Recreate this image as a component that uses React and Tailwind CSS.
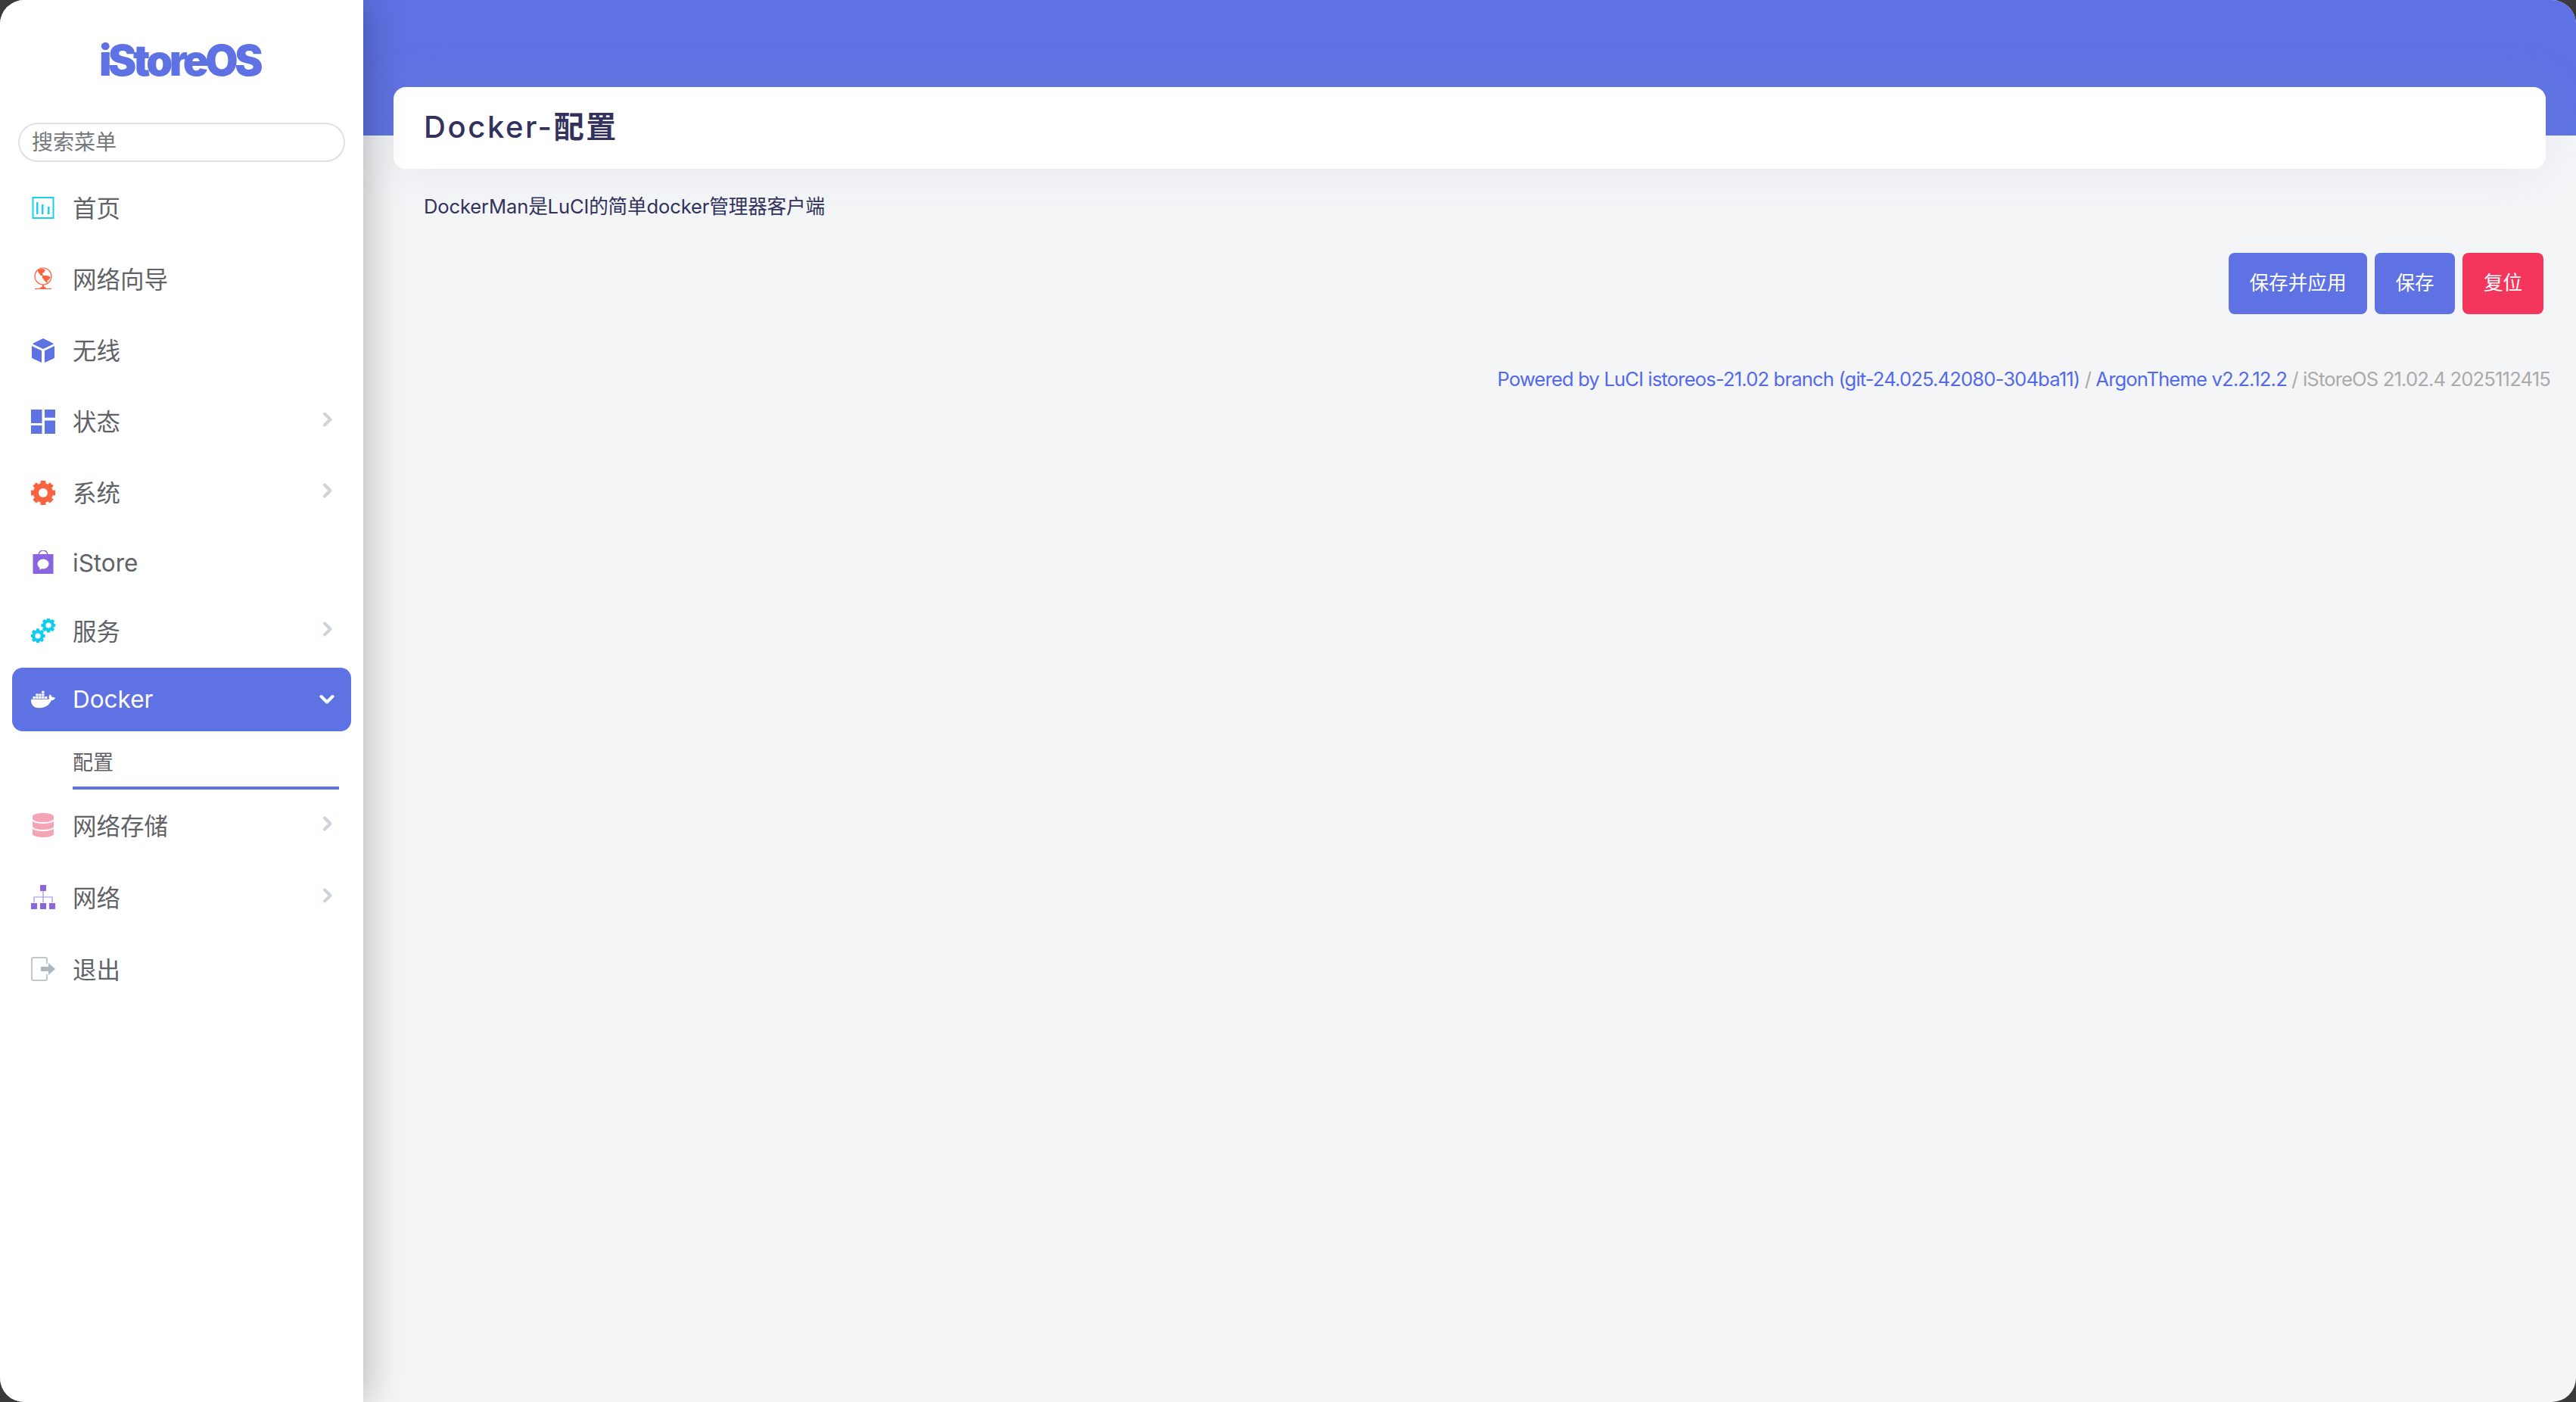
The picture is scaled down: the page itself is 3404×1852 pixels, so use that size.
import {FaDatabase, FaDocker} from 'react-icons/fa'

// gear with eight teeth, used by 系统 and 服务
function Gear({x = 16, y = 16, r = 1, color}) {
    return (
        <g transform={`translate(${x} ${y}) scale(${r})`} fill={color}>
            {[0, 45, 90, 135, 180, 225, 270, 315].map(a => (
                <rect key={a} x="-3.4" y="-16" width="6.8" height="7" transform={`rotate(${a})`}/>
            ))}
            <circle r="9.5" fill="none" stroke={color} strokeWidth="7"/>
        </g>
    )
}

const icons = {
    home: (
        <svg viewBox="0 0 32 32" className="w-8 h-8">
            <rect x="2.5" y="2" width="27" height="27" fill="none" stroke="#1ad0f1" strokeWidth="2"/>
            <rect x="7" y="8" width="2.5" height="16" fill="#1ad0f1"/>
            <rect x="14" y="11" width="2.5" height="13" fill="#1ad0f1"/>
            <rect x="22" y="14" width="2.5" height="10" fill="#1ad0f1"/>
        </svg>
    ),
    globe: (
        <svg viewBox="0 0 32 32" className="w-8 h-8">
            <circle cx="16" cy="12" r="11" fill="none" stroke="#fb6340" strokeWidth="1.2"/>
            <path d="M9 3l7-1 3 2-2 3-2 1 1 3-3 0-4-5z" fill="#fb6340"/>
            <path d="M15 11l6 0 5 2-2 3-2 1-1 4-3-3-3-4z" fill="#fb6340"/>
            <path d="M15 23h2v3h-2z" fill="#fb6340"/>
            <path d="M13 26h6l1 2H12z" fill="#fb6340"/>
            <path d="M5 28.5h22" stroke="#fb6340" strokeWidth="1.2"/>
        </svg>
    ),
    cube: (
        <svg viewBox="0 0 32 32" className="w-8 h-8">
            <path d="M16 0l13.2 6.6a1 1 0 0 1 0 1.2L16 14 2.8 7.8a1 1 0 0 1 0-1.2z" fill="#5e72e4"/>
            <path d="M1 10l13 6.3V32L2 26.5a2 2 0 0 1-1-1.8z" fill="#5e72e4"/>
            <path d="M31 10l-13 6.3V32l12-5.5a2 2 0 0 0 1-1.8z" fill="#5e72e4"/>
        </svg>
    ),
    dash: (
        <svg viewBox="0 0 32 32" className="w-8 h-8" fill="#5e72e4">
            <rect x="0" y="0" width="14.5" height="18"/>
            <rect x="18" y="0" width="14.5" height="10.7"/>
            <rect x="0" y="21" width="14.5" height="11"/>
            <rect x="18" y="14.5" width="14.5" height="17.5"/>
        </svg>
    ),
    gear: (
        <svg viewBox="0 0 32 32" className="w-8 h-8">
            <Gear color="#fb6340"/>
        </svg>
    ),
    bag: (
        <svg viewBox="0 0 32 32" className="w-8 h-8">
            <path d="M10 8V6a6 6 0 0 1 12 0v2" fill="none" stroke="#8965e0" strokeWidth="1.5"/>
            <path d="M2.5 7h27v26h-27z" fill="#8965e0" transform="translate(0 -2)"/>
            <ellipse cx="16" cy="18" rx="7.5" ry="6.5" fill="#fff"/>
            <path d="M12 22l-1 4 5-3z" fill="#fff"/>
        </svg>
    ),
    gears: (
        <svg viewBox="0 0 32 32" className="w-8 h-8">
            <Gear x={23} y={9} r={0.6} color="#11cdef"/>
            <Gear x={9} y={23} r={0.6} color="#11cdef"/>
        </svg>
    ),
    docker: <FaDocker className="w-8 h-8 text-white"/>,
    db: <FaDatabase className="w-7 h-8 text-[#f3a4b5]"/>,
    net: (
        <svg viewBox="0 0 32 32" className="w-8 h-8">
            <g fill="#8965e0">
                <rect x="12" y="0" width="8" height="8"/>
                <rect x="0" y="24" width="8" height="8"/>
                <rect x="12" y="24" width="8" height="8"/>
                <rect x="24" y="24" width="8" height="8"/>
            </g>
            <path d="M16 8v15M4 23v-7h24v7" fill="none" stroke="#a58ce8" strokeWidth="1.2"/>
        </svg>
    ),
    logout: (
        <svg viewBox="0 0 32 32" className="w-8 h-8">
            <path d="M21 9V3a2 2 0 0 0-2-2H3a2 2 0 0 0-2 2v26a2 2 0 0 0 2 2h16a2 2 0 0 0 2-2v-6" fill="none" stroke="#c2c8d0" strokeWidth="2"/>
            <path d="M13 13h10V8l9 8-9 8v-5H13z" fill="#adb5bd"/>
        </svg>
    ),
}

function ChevronRight() {
    return (
        <svg viewBox="0 0 14 20" className="w-[14px] h-5 absolute right-[40px] top-[calc(50%-14px)]">
            <path d="M3 2.5l7.500 7.500L3 17.500" fill="none" stroke="#ced4da" strokeWidth="4" strokeLinecap="round" strokeLinejoin="round"/>
        </svg>
    )
}

function MenuItem({icon, label, arrow, h}) {
    return (
        <div className={`relative flex items-center pl-[41px] text-[#5f6267] text-[31.500px] ${h}`}>
            <span className="w-8 -mt-[3px] flex justify-center shrink-0">{icons[icon]}</span>
            <span className="ml-[23px]">{label}</span>
            {arrow && <ChevronRight/>}
        </div>
    )
}

export default function App() {
    return (
        <div className="h-[1852px] w-[3404px] bg-[#3a3a3c] overflow-hidden font-[Inter,'Noto_Sans_CJK_SC',sans-serif]">
            <div className="h-full w-full flex rounded-[32px] overflow-hidden bg-[#f4f5f7]">
                <aside className="relative z-10 w-[480px] shrink-0 bg-white shadow-[0_0_50px_rgba(0,0,0,0.3)]">
                    <div className="h-[162px] flex justify-center pt-[42px] pr-[6px]">
                        <span className="text-[#5e72e4] text-[56px] leading-[76px] font-black tracking-[-0.08em]">iStoreOS</span>
                    </div>
                    <div className="mx-6 h-[52px] flex items-center rounded-full border-2 border-[#dee2e6] pl-[16px] text-[28px] text-[#77797c]">
                        搜索菜单
                    </div>
                    <nav className="mt-[15px]">
                        <MenuItem icon="home" label="首页" h="h-[94px]"/>
                        <MenuItem icon="globe" label="网络向导" h="h-[94px]"/>
                        <MenuItem icon="cube" label="无线" h="h-[94px]"/>
                        <MenuItem icon="dash" label="状态" arrow h="h-[94px]"/>
                        <MenuItem icon="gear" label="系统" arrow h="h-[94px]"/>
                        <MenuItem icon="bag" label="iStore" h="h-[90px]"/>
                        <MenuItem icon="gears" label="服务" arrow h="h-[91px]"/>
                        <div className="relative mx-4 mt-[2px] h-[84px] flex items-center pl-[25px] bg-[#5e72e4] rounded-[14px] text-white text-[31.500px]">
                            <span className="w-8 flex justify-center shrink-0">{icons.docker}</span>
                            <span className="ml-[23px]">Docker</span>
                            <svg viewBox="0 0 20 14" className="w-5 h-[14px] absolute right-[22px] top-[35px]">
                                <path d="M2.500 3l7.500 7.500L17.500 3" fill="none" stroke="#fff" strokeWidth="4" strokeLinecap="round" strokeLinejoin="round"/>
                            </svg>
                        </div>
                        <div className="ml-[96px] mr-8 h-[77px] flex items-center pt-[11px] border-b-4 border-[#5e72e4] text-[27px] text-[#5f6267]">
                            配置
                        </div>
                        <MenuItem icon="db" label="网络存储" arrow h="h-[95px] mt-px"/>
                        <MenuItem icon="net" label="网络" arrow h="h-[95px]"/>
                        <MenuItem icon="logout" label="退出" h="h-[95px]"/>
                    </nav>
                </aside>
                <main className="flex-1 min-w-0">
                    <div className="h-[179px] bg-[#5e72e4]"/>
                    <div className="mx-10 -mt-[64px] relative h-[108px] flex items-center px-[40px] pb-[2px] bg-white rounded-[16px] shadow-[0_0_64px_rgba(136,152,170,0.15)]">
                        <h1 className="text-[40px] font-medium tracking-[2.600px] text-[#32325d]">
                            Docker-<span className="font-bold">配置</span>
                        </h1>
                    </div>
                    <p className="mt-[32px] ml-[80px] text-[25.600px] leading-[36px] tracking-[-0.150px] text-[#32325d]">
                        DockerMan是LuCI的简单docker管理器客户端
                    </p>
                    <div className="mt-[43px] mr-[43px] flex justify-end gap-[10px] text-white text-[25.600px]">
                        <button className="w-[183px] h-[81px] rounded-[8px] bg-[#5e72e4]">保存并应用</button>
                        <button className="w-[106px] h-[81px] rounded-[8px] bg-[#5e72e4]">保存</button>
                        <button className="w-[107px] h-[81px] rounded-[8px] bg-[#f5365c]">复位</button>
                    </div>
                    <div className="mt-[68px] mr-[34px] text-right text-[25.600px] leading-[36px] tracking-[-0.850px] text-[#aaaaaa]">
                        <span className="text-[#5369ea]">Powered by LuCI istoreos-21.02 branch (git-24.025.42080-304ba11)</span>
                        {' / '}
                        <span className="text-[#5369ea]">ArgonTheme v2.2.12.2</span>
                        {' / iStoreOS 21.02.4 2025112415'}
                    </div>
                </main>
            </div>
        </div>
    )
}
